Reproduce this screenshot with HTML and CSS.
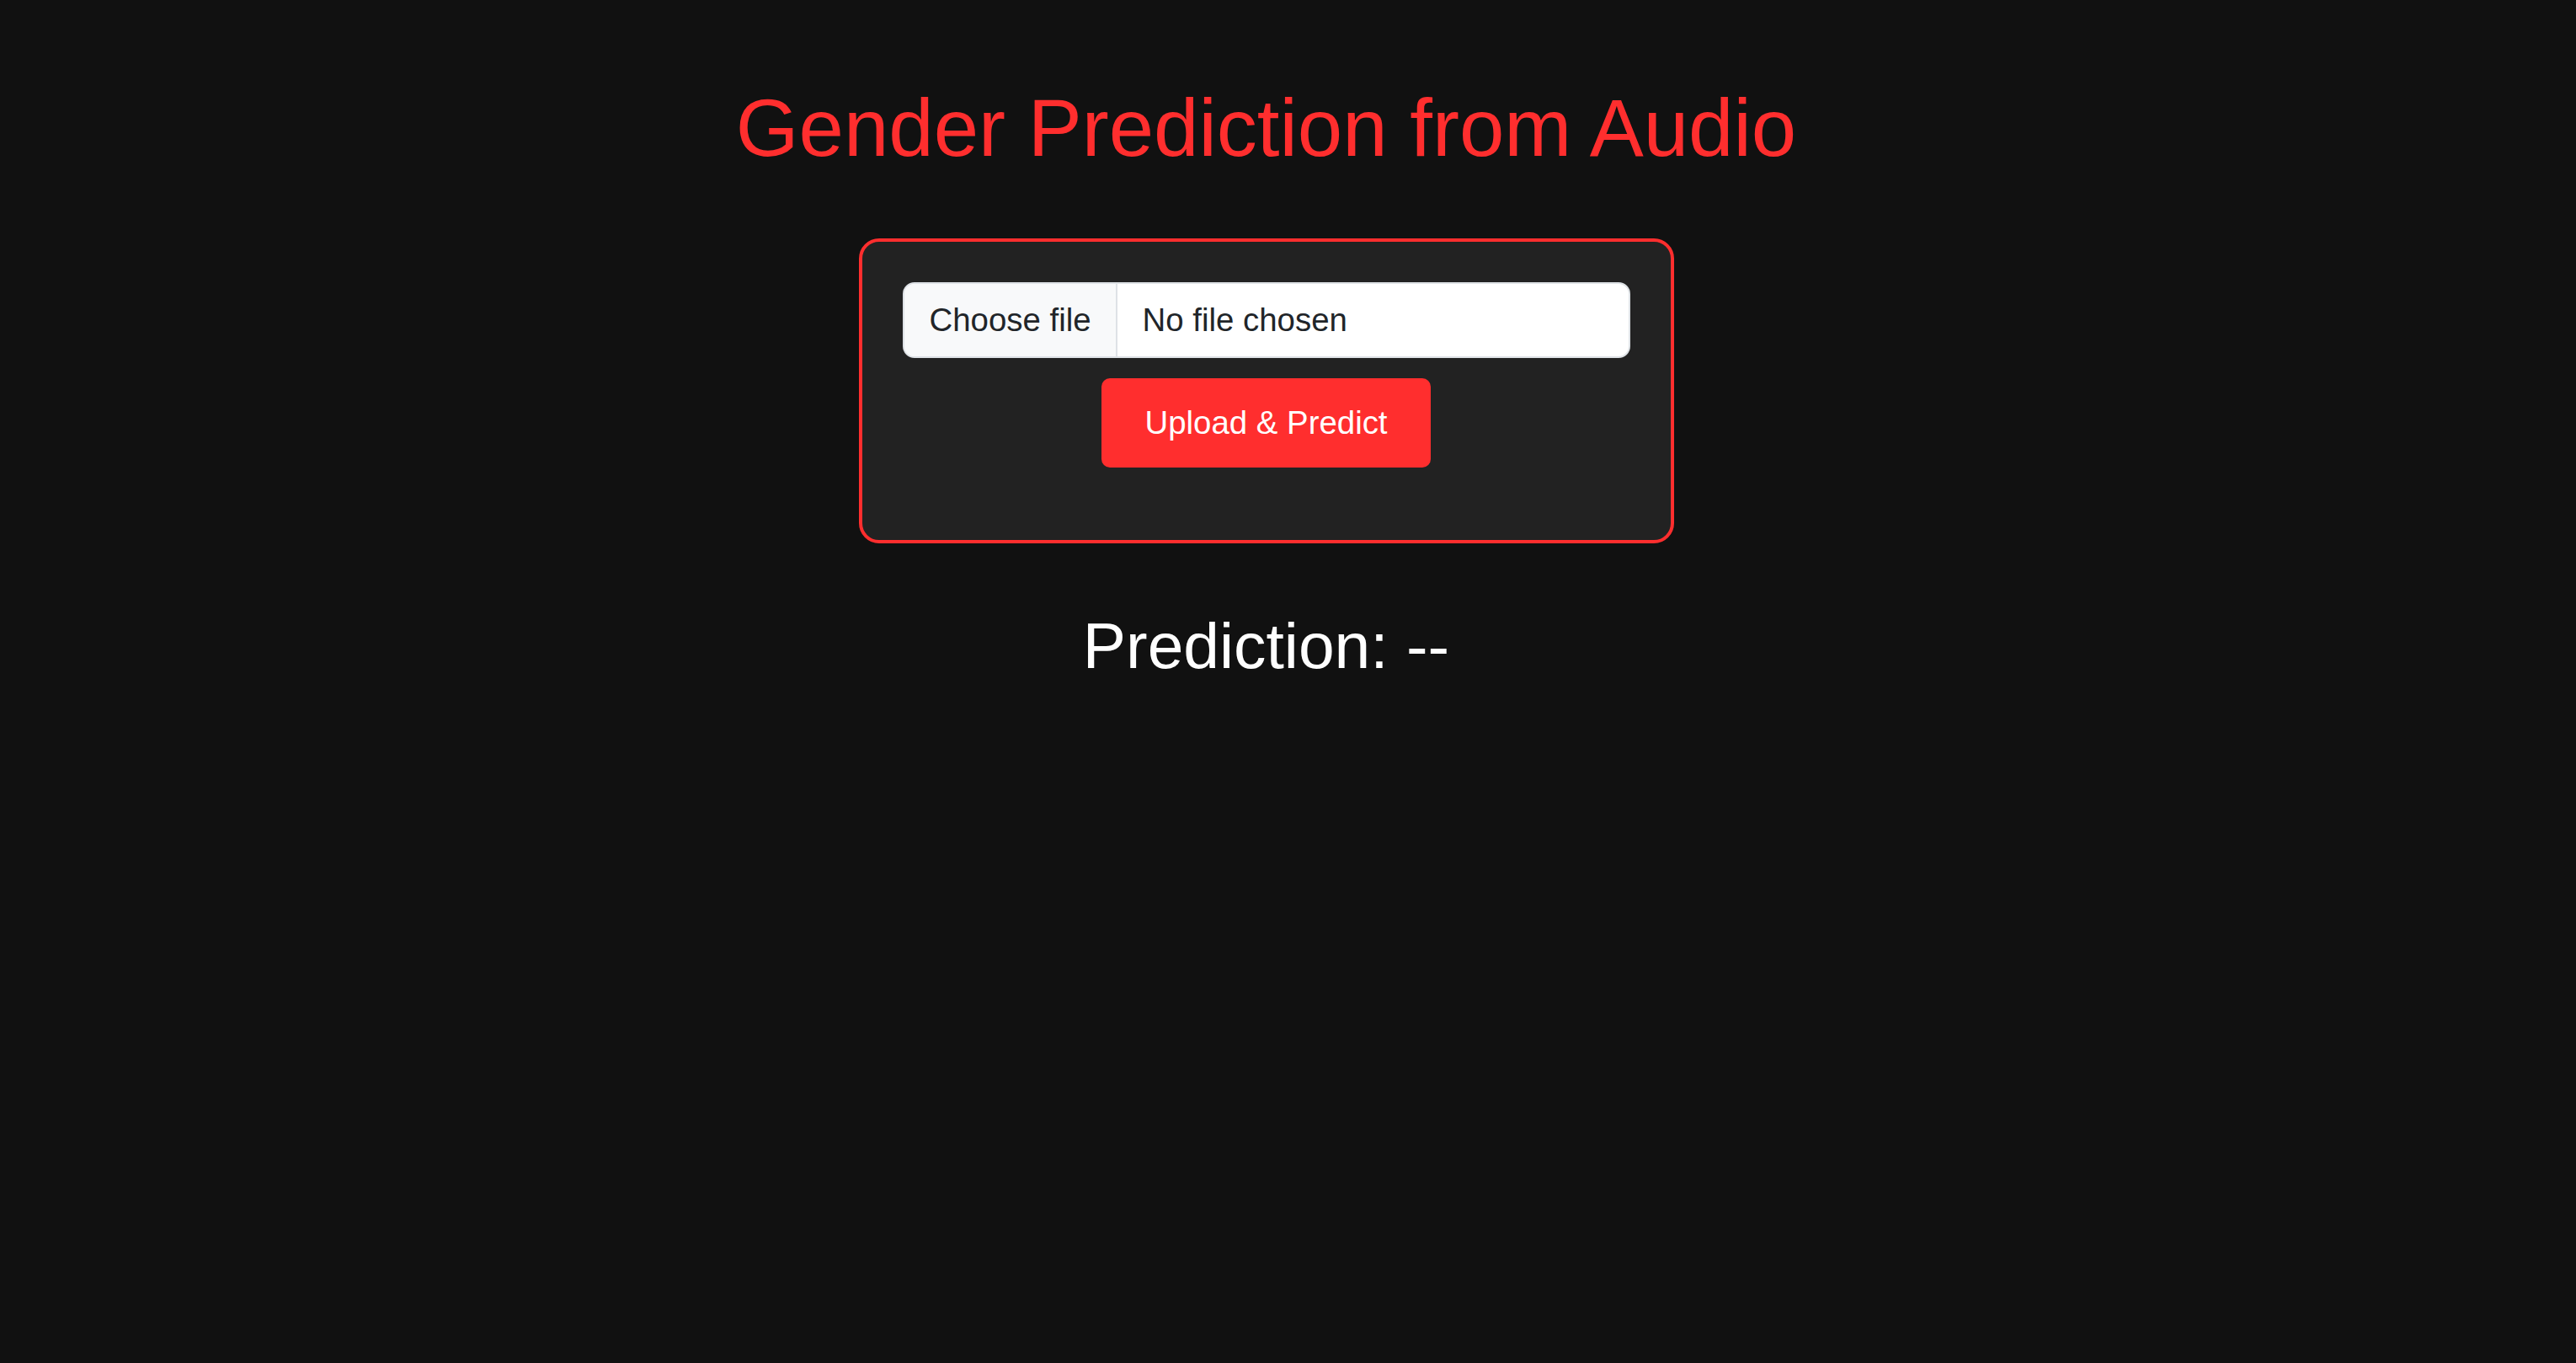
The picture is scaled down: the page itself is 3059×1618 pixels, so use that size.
FILE: index.html
```html
<!DOCTYPE html>
<html lang="en">
<head>
<meta charset="utf-8">
<title>Gender Prediction from Audio</title>
<link rel="stylesheet" href="styles.css">
</head>
<body>
  <main class="page">
    <h1 class="title">Gender Prediction from Audio</h1>
    <form class="card">
      <label class="file-field">
        <input class="file-input" type="file" accept="audio/*">
        <span class="file-btn">Choose file</span>
        <span class="file-name">No file chosen</span>
      </label>
      <button class="btn" type="button">Upload &amp; Predict</button>
    </form>
    <h2 class="result">Prediction: --</h2>
  </main>
</body>
</html>
```

FILE: styles.css
```css
html, body {
  margin: 0;
  background: #111111;
}

body {
  font-family: "Liberation Sans", Arial, sans-serif;
  color: #ffffff;
}

.page {
  display: flex;
  flex-direction: column;
  align-items: center;
  padding: 97px 52px 0 0;
}

.title {
  margin: 0 0 76px;
  font-size: 96px;
  font-weight: 400;
  line-height: normal;
  color: #ff2e2e;
}

.card {
  box-sizing: border-box;
  width: 968px;
  padding: 48px 48px 86px;
  background: #222222;
  border: 4.8px solid #ff2e2e;
  border-radius: 24px;
  display: flex;
  flex-direction: column;
  align-items: center;
  gap: 24px;
}

.file-field {
  box-sizing: border-box;
  display: flex;
  align-items: stretch;
  width: 100%;
  height: 90px;
  font-size: 38.4px;
  line-height: 1.5;
  color: #212529;
  background: #ffffff;
  border: 2.4px solid #dee2e6;
  border-radius: 14px;
  overflow: hidden;
  cursor: pointer;
}

.file-input {
  position: absolute;
  width: 1px;
  height: 1px;
  opacity: 0;
  overflow: hidden;
}

.file-btn {
  display: flex;
  align-items: center;
  padding: 0 29px 0 30px;
  background: #f8f9fa;
  border-right: 2.4px solid #dee2e6;
}

.file-name {
  display: flex;
  align-items: center;
  padding-left: 30px;
}

.btn {
  margin: 0;
  padding: 31px 51px;
  font-family: "Liberation Sans", Arial, sans-serif;
  font-size: 38.4px;
  line-height: 1.15;
  color: #ffffff;
  background: #ff2e2e;
  border: 0;
  border-radius: 10px;
}

.result {
  margin: 77px 0 0;
  font-size: 76.8px;
  font-weight: 400;
  line-height: normal;
  color: #ffffff;
}
```
